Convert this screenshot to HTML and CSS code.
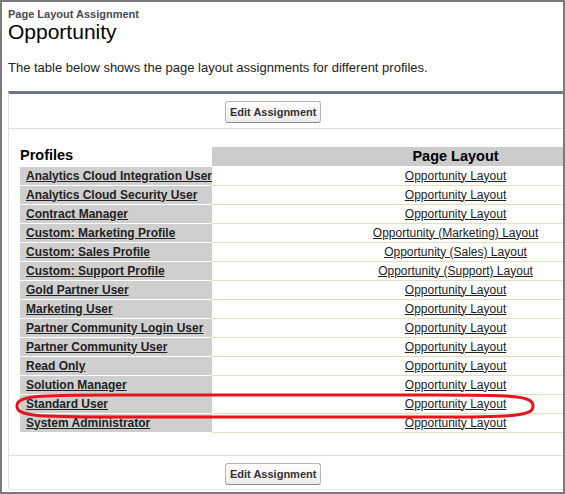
FILE: index.html
```html
<!DOCTYPE html>
<html lang="en">
<head>
    <meta charset="UTF-8">
    <meta name="viewport" content="width=device-width, initial-scale=1.0">
    <title>Page Layout Assignment: Opportunity</title>
    <link rel="stylesheet" href="styles.css">
</head>
<body>

    <div class="frame">

        <!-- Page header -->
        <div class="page-type">Page Layout Assignment</div>
        <h1 class="page-title">Opportunity</h1>
        <p class="page-desc">The table below shows the page layout assignments for different profiles.</p>

        <!-- Assignment block -->
        <div class="block">
            <div class="block-buttons top">
                <button class="btn">Edit Assignment</button>
            </div>

            <div class="block-body">
                <table class="assign-table">
                    <thead>
                        <tr>
                            <th class="col-profile">Profiles</th>
                            <th class="col-layout">Page Layout</th>
                        </tr>
                    </thead>
                    <tbody>
                        <tr><td class="profile"><a href="#">Analytics Cloud Integration User</a></td><td class="layout"><a href="#">Opportunity Layout</a></td></tr>
                        <tr><td class="profile"><a href="#">Analytics Cloud Security User</a></td><td class="layout"><a href="#">Opportunity Layout</a></td></tr>
                        <tr><td class="profile"><a href="#">Contract Manager</a></td><td class="layout"><a href="#">Opportunity Layout</a></td></tr>
                        <tr><td class="profile"><a href="#">Custom: Marketing Profile</a></td><td class="layout"><a href="#">Opportunity (Marketing) Layout</a></td></tr>
                        <tr><td class="profile"><a href="#">Custom: Sales Profile</a></td><td class="layout"><a href="#">Opportunity (Sales) Layout</a></td></tr>
                        <tr><td class="profile"><a href="#">Custom: Support Profile</a></td><td class="layout"><a href="#">Opportunity (Support) Layout</a></td></tr>
                        <tr><td class="profile"><a href="#">Gold Partner User</a></td><td class="layout"><a href="#">Opportunity Layout</a></td></tr>
                        <tr><td class="profile"><a href="#">Marketing User</a></td><td class="layout"><a href="#">Opportunity Layout</a></td></tr>
                        <tr><td class="profile"><a href="#">Partner Community Login User</a></td><td class="layout"><a href="#">Opportunity Layout</a></td></tr>
                        <tr><td class="profile"><a href="#">Partner Community User</a></td><td class="layout"><a href="#">Opportunity Layout</a></td></tr>
                        <tr><td class="profile"><a href="#">Read Only</a></td><td class="layout"><a href="#">Opportunity Layout</a></td></tr>
                        <tr><td class="profile"><a href="#">Solution Manager</a></td><td class="layout"><a href="#">Opportunity Layout</a></td></tr>
                        <tr><td class="profile"><a href="#">Standard User</a></td><td class="layout"><a href="#">Opportunity Layout</a></td></tr>
                        <tr><td class="profile"><a href="#">System Administrator</a></td><td class="layout"><a href="#">Opportunity Layout</a></td></tr>
                    </tbody>
                </table>
            </div>

            <div class="block-buttons bottom">
                <button class="btn">Edit Assignment</button>
            </div>
        </div>

        <!-- Highlight around the Standard User row -->
        <svg class="highlight" width="522" height="30" viewBox="0 0 522 30">
            <path d="M3 15 C3 5 20 4 100 4 L422 4 C502 4 519 5 519 15 C519 25 502 26 422 26 L100 26 C20 26 3 25 3 15 Z" fill="none" stroke="#e8141b" stroke-width="3"/>
        </svg>

    </div>

</body>
</html>
```

FILE: styles.css
```css
* {
    margin: 0;
    padding: 0;
    box-sizing: border-box;
    font-family: "Liberation Sans", Arial, sans-serif;
}
body {
    background: #fff;
}

/* Outer frame */
.frame {
    position: relative;
    width: 565px;
    height: 494px;
    border: 2px solid #7a7a7a;
    padding: 6px 0 0 6px;
    overflow: hidden;
    background: #fff;
}

/* Header */
.page-type {
    font-size: 11px;
    font-weight: bold;
    line-height: 13px;
    color: #4a4a56;
}
.page-title {
    font-size: 21px;
    font-weight: normal;
    line-height: 22px;
    color: #000;
}
.page-desc {
    font-size: 13px;
    line-height: 15px;
    color: #222;
    margin-top: 17px;
}

/* Block */
.block {
    width: 705px;
    margin-top: 16px;
    border-top: 3px solid #707589;
    border-left: 1px solid #e0e0e0;
    border-bottom: 1px solid #e0e0e0;
    border-bottom-left-radius: 4px;
}
.block-buttons {
    padding-left: 216px;
}
.block-buttons.top {
    padding-top: 7px;
    padding-bottom: 5px;
    border-bottom: 1px solid #dfdfdf;
}
.block-buttons.bottom {
    padding-top: 7px;
    padding-bottom: 4px;
    border-top: 1px solid #dfdfdf;
}
.btn {
    height: 22px;
    padding: 0 4px;
    font-size: 11px;
    font-weight: bold;
    color: #333;
    background: linear-gradient(#ffffff, #ececec);
    border: 1px solid #b5b5b5;
    border-bottom-color: #8a8a8a;
    border-radius: 3px;
    cursor: pointer;
}

.block-body {
    padding: 18px 0 22px 11px;
}

/* Assignment table */
.assign-table {
    border-collapse: collapse;
    font-size: 12px;
}
.assign-table th {
    font-size: 14.5px;
    font-weight: bold;
    color: #000;
    height: 19px;
    line-height: 19px;
    border-bottom: 1px solid #fff;
}
.col-profile {
    width: 192px;
    text-align: left;
    vertical-align: top;
    line-height: 16px !important;
}
.col-layout {
    width: 487px;
    text-align: center;
    background: #cccccc;
}
.assign-table td {
    height: 19px;
    line-height: 17px;
    white-space: nowrap;
}
.assign-table a {
    color: #222;
}
td.profile {
    background: #cfcfcf;
    padding-left: 6px;
    border-bottom: 1px solid #fff;
}
td.profile a {
    font-weight: bold;
}
td.layout {
    text-align: center;
    border-bottom: 1px solid #e6dec2;
}

/* Red ring drawn over the Standard User row */
.highlight {
    position: absolute;
    left: 12px;
    top: 389px;
}
```
